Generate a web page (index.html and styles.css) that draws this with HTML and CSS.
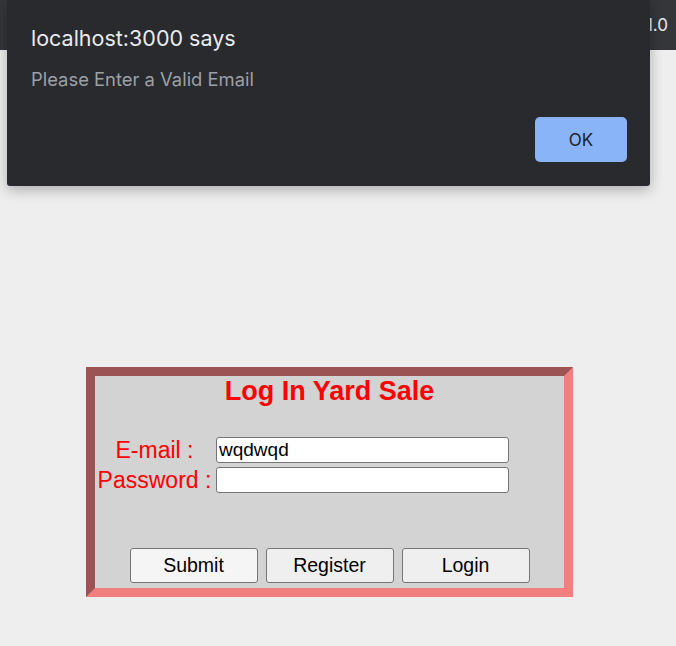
FILE: index.html
```html
<!DOCTYPE html>
<html lang="en">
<head>
  <meta charset="UTF-8">
  <meta name="viewport" content="width=device-width, initial-scale=1.0">
  <title>Log In Yard Sale</title>
  <link rel="stylesheet" href="styles.css">
</head>
<body>
  <div class="top-bar">
    <span class="version">1.0</span>
  </div>

  <div class="alert-dialog">
    <div class="alert-title">localhost:3000 says</div>
    <div class="alert-message">Please Enter a Valid Email</div>
    <div class="alert-actions">
      <button type="button" class="alert-ok">OK</button>
    </div>
  </div>

  <main class="page">
    <div class="login-box">
      <h1 class="login-title">Log In Yard Sale</h1>
      <form class="login-form">
        <label for="email">E-mail :</label>
        <input type="text" id="email" value="wqdwqd">
        <label for="password">Password :</label>
        <input type="password" id="password">
      </form>
      <div class="button-row">
        <button type="button" class="btn btn-light">Submit</button>
        <button type="button" class="btn">Register</button>
        <button type="button" class="btn">Login</button>
      </div>
    </div>
  </main>
</body>
</html>
```

FILE: styles.css
```css
* {
  margin: 0;
  padding: 0;
  box-sizing: border-box;
}

body {
  font-family: 'Liberation Sans', Arial, sans-serif;
  background: #eeeeee;
  width: 676px;
  height: 646px;
  overflow: hidden;
}

.top-bar {
  height: 50px;
  background: #35363a;
  display: flex;
  justify-content: flex-end;
  align-items: center;
  padding-right: 8px;
}

.version {
  font-family: Inter, 'Noto Sans', sans-serif;
  font-size: 17px;
  color: #e8eaed;
}

/* alert sits above the page */
.alert-dialog {
  position: absolute;
  top: 0;
  left: 7px;
  width: 643px;
  height: 186px;
  background: #292a2d;
  border-radius: 0 0 3px 3px;
  box-shadow: 0 4px 14px rgba(0, 0, 0, 0.28);
  padding: 25px 23px 0 24px;
  font-family: Inter, 'Noto Sans', sans-serif;
}

.alert-title {
  font-size: 21.5px;
  color: #e8eaed;
  line-height: 27px;
}

.alert-message {
  font-size: 18.4px;
  color: #9aa0a6;
  line-height: 23px;
  margin-top: 16px;
}

.alert-actions {
  display: flex;
  justify-content: flex-end;
  margin-top: 26px;
}

.alert-ok {
  width: 92px;
  height: 45px;
  background: #8ab4f8;
  color: #202124;
  border: none;
  border-radius: 5px;
  font-family: Inter, 'Noto Sans', sans-serif;
  font-size: 17px;
}

.page {
  padding: 317px 0 0 86px;
}

.login-box {
  width: 487px;
  height: 230px;
  background: #d3d3d3;
  border: 9px inset #f08080;
  display: flex;
  flex-direction: column;
}

.login-title {
  text-align: center;
  font-size: 27px;
  font-weight: bold;
  color: #ff0000;
  line-height: 30px;
}

.login-form {
  display: grid;
  grid-template-columns: 115px 293px;
  column-gap: 4px;
  row-gap: 4px;
  align-items: center;
  margin: 31px 0 0 2px;
}

.login-form label {
  text-align: center;
  font-size: 23px;
  color: #ff0000;
  line-height: 24px;
  white-space: nowrap;
}

.login-form input {
  height: 26px;
  font-family: 'Liberation Sans', Arial, sans-serif;
  font-size: 19px;
  color: #000000;
  background: #ffffff;
  border: 1px solid #767676;
  border-radius: 3px;
  padding: 1px 2px;
}

.button-row {
  display: flex;
  justify-content: center;
  gap: 8px;
  margin-top: auto;
  padding-bottom: 5px;
}

.btn {
  width: 128px;
  height: 35px;
  font-family: 'Liberation Sans', Arial, sans-serif;
  font-size: 19.5px;
  color: #000000;
  background: #efefef;
  border: 1px solid #767676;
  border-radius: 3px;
}

.btn-light {
  background: #f5f5f5;
}
```
